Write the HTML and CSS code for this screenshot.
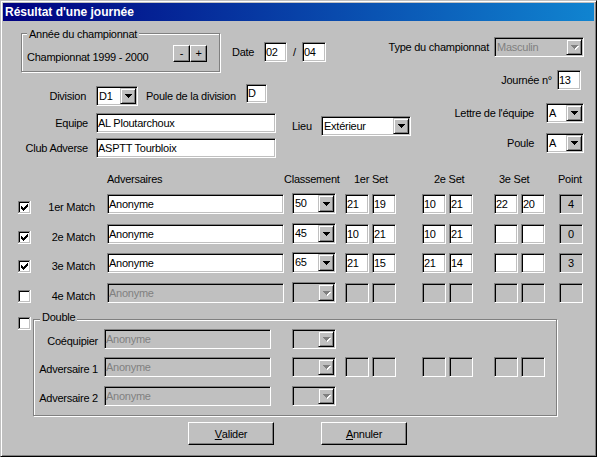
FILE: index.html
```html
<!DOCTYPE html>
<html lang="fr">
<head>
<meta charset="utf-8">
<title>Résultat d'une journée</title>
<link rel="stylesheet" href="styles.css">
</head>
<body>
<svg class="defs" width="0" height="0" aria-hidden="true">
  <defs>
    <symbol id="tri" viewBox="0 0 7 4"><path d="M0 0h7v1h-1v1h-1v1h-1v1h-1v-1h-1v-1h-1v-1h-1z"/></symbol>
    <symbol id="box" viewBox="0 0 13 13">
      <rect x="2" y="2" width="9" height="9" fill="#fff"/>
      <path fill="#808080" d="M0 0h12v1H1v11H0z"/>
      <path fill="#000" d="M1 1h10v1H2v9H1z"/>
      <path fill="#c0c0c0" d="M11 1h1v11H1v-1h10z"/>
      <path fill="#fff" d="M12 0h1v13H0v-1h12z"/>
    </symbol>
    <symbol id="tick" viewBox="0 0 13 13">
      <path fill="#000" d="M3 5h1v3H3z M4 6h1v3H4z M5 7h1v3H5z M6 6h1v3H6z M7 5h1v3H7z M8 4h1v3H8z M9 3h1v3H9z"/>
    </symbol>
  </defs>
</svg>
<div class="window">
  <div class="titlebar">Résultat d'une journée</div>
  <div class="client">

    <div class="row1">
      <div class="group g-annee">
        <span class="legend">Année du championnat</span>
        <div class="annee-body">
          <span class="annee-text">Championnat 1999 - 2000</span>
          <span class="btn btn-sm first">-</span><span class="btn btn-sm">+</span>
        </div>
      </div>
      <div class="date">
        <span class="lbl date-lbl">Date</span>
        <span class="edit w23">02</span>
        <span class="slash">/</span>
        <span class="edit w24">04</span>
      </div>
      <div class="type">
        <span class="lbl type-lbl">Type du championnat</span>
        <div class="combo dis w90"><span class="val">Masculin</span><span class="drop"><svg class="tri-dis" width="8" height="5"><use href="#tri" x="1" y="1" width="7" height="4" fill="#fff"/><use href="#tri" width="7" height="4" fill="#808080"/></svg></span></div>
      </div>
    </div>

    <div class="toprest">
      <div class="leftcol">
        <div class="frow row-div">
          <span class="flabel fl-div">Division</span>
          <div class="combo w42"><span class="val">D1</span><span class="drop"><svg width="7" height="4"><use href="#tri"/></svg></span></div>
          <span class="pdl">Poule de la division</span>
          <span class="edit w21 h19">D</span>
        </div>
        <div class="frow row-eq">
          <span class="flabel">Equipe</span>
          <span class="edit w180">AL Ploutarchoux</span>
          <div class="lieu">
            <span class="lbl lieu-lbl">Lieu</span>
            <div class="combo w90"><span class="val">Extérieur</span><span class="drop"><svg width="7" height="4"><use href="#tri"/></svg></span></div>
          </div>
        </div>
        <div class="frow row-club">
          <span class="flabel">Club Adverse</span>
          <span class="edit w180">ASPTT Tourbloix</span>
        </div>
      </div>
      <div class="rightcol">
        <div class="rrow r-journee">
          <span class="lbl">Journée n°</span>
          <span class="edit w24">13</span>
        </div>
        <div class="rrow r-lettre">
          <span class="lbl">Lettre de l'équipe</span>
          <div class="combo w38"><span class="val">A</span><span class="drop"><svg width="7" height="4"><use href="#tri"/></svg></span></div>
        </div>
        <div class="rrow r-poule">
          <span class="lbl">Poule</span>
          <div class="combo w38"><span class="val">A</span><span class="drop"><svg width="7" height="4"><use href="#tri"/></svg></span></div>
        </div>
      </div>
    </div>

    <div class="mhead">
      <span class="h0"></span>
      <span class="h1">Adversaires</span>
      <span class="h2">Classement</span>
      <span class="h3">1er Set</span>
      <span class="h4">2e Set</span>
      <span class="h5">3e Set</span>
      <span class="h6">Point</span>
    </div>

    <div class="mrow r1">
      <svg class="cb" width="13" height="13"><use href="#box"/><use href="#tick"/></svg>
      <span class="mlabel">1er Match</span>
      <span class="edit w177 ml12">Anonyme</span>
      <div class="combo tall w44 ml8"><span class="val">50</span><span class="drop"><svg width="7" height="4"><use href="#tri"/></svg></span></div>
      <span class="edit s ml9">21</span>
      <span class="edit s ml3">19</span>
      <span class="edit s ml26">10</span>
      <span class="edit s ml3">21</span>
      <span class="edit s ml21">22</span>
      <span class="edit s ml3">20</span>
      <span class="edit s pt ml14">4</span>
    </div>

    <div class="mrow r2">
      <svg class="cb" width="13" height="13"><use href="#box"/><use href="#tick"/></svg>
      <span class="mlabel">2e Match</span>
      <span class="edit w177 ml12">Anonyme</span>
      <div class="combo tall w44 ml8"><span class="val">45</span><span class="drop"><svg width="7" height="4"><use href="#tri"/></svg></span></div>
      <span class="edit s ml9">10</span>
      <span class="edit s ml3">21</span>
      <span class="edit s ml26">10</span>
      <span class="edit s ml3">21</span>
      <span class="edit s ml21"></span>
      <span class="edit s ml3"></span>
      <span class="edit s pt ml14">0</span>
    </div>

    <div class="mrow r3">
      <svg class="cb" width="13" height="13"><use href="#box"/><use href="#tick"/></svg>
      <span class="mlabel">3e Match</span>
      <span class="edit w177 ml12">Anonyme</span>
      <div class="combo tall w44 ml8"><span class="val">65</span><span class="drop"><svg width="7" height="4"><use href="#tri"/></svg></span></div>
      <span class="edit s ml9">21</span>
      <span class="edit s ml3">15</span>
      <span class="edit s ml26">21</span>
      <span class="edit s ml3">14</span>
      <span class="edit s ml21"></span>
      <span class="edit s ml3"></span>
      <span class="edit s pt ml14">3</span>
    </div>

    <div class="mrow r4">
      <svg class="cb" width="13" height="13"><use href="#box"/></svg>
      <span class="mlabel">4e Match</span>
      <span class="edit dis w177 ml12">Anonyme</span>
      <div class="combo dis tall w44 ml8"><span class="val"></span><span class="drop"><svg class="tri-dis" width="8" height="5"><use href="#tri" x="1" y="1" width="7" height="4" fill="#fff"/><use href="#tri" width="7" height="4" fill="#808080"/></svg></span></div>
      <span class="edit dis s ml9"></span>
      <span class="edit dis s ml3"></span>
      <span class="edit dis s ml26"></span>
      <span class="edit dis s ml3"></span>
      <span class="edit dis s ml21"></span>
      <span class="edit dis s ml3"></span>
      <span class="edit dis s ml14"></span>
    </div>

    <div class="double">
      <svg class="cb" width="13" height="13"><use href="#box"/></svg>
      <div class="group g-double">
        <span class="legend">Double</span>
        <div class="drow d1">
          <span class="dlabel">Coéquipier</span>
          <span class="edit dis w167 ml6">Anonyme</span>
          <div class="combo dis w44 ml21"><span class="val"></span><span class="drop"><svg class="tri-dis" width="8" height="5"><use href="#tri" x="1" y="1" width="7" height="4" fill="#fff"/><use href="#tri" width="7" height="4" fill="#808080"/></svg></span></div>
        </div>
        <div class="drow d2">
          <span class="dlabel">Adversaire 1</span>
          <span class="edit dis w167 ml6">Anonyme</span>
          <div class="combo dis w44 ml21"><span class="val"></span><span class="drop"><svg class="tri-dis" width="8" height="5"><use href="#tri" x="1" y="1" width="7" height="4" fill="#fff"/><use href="#tri" width="7" height="4" fill="#808080"/></svg></span></div>
          <span class="edit dis s ml9"></span>
          <span class="edit dis s ml3"></span>
          <span class="edit dis s ml26"></span>
          <span class="edit dis s ml3"></span>
          <span class="edit dis s ml21"></span>
          <span class="edit dis s ml3"></span>
        </div>
        <div class="drow d3">
          <span class="dlabel">Adversaire 2</span>
          <span class="edit dis w167 ml6">Anonyme</span>
          <div class="combo dis w44 ml21"><span class="val"></span><span class="drop"><svg class="tri-dis" width="8" height="5"><use href="#tri" x="1" y="1" width="7" height="4" fill="#fff"/><use href="#tri" width="7" height="4" fill="#808080"/></svg></span></div>
        </div>
      </div>
    </div>

    <div class="buttons">
      <span class="btn pbtn valider"><u>V</u>alider</span>
      <span class="btn pbtn annuler"><u>A</u>nnuler</span>
    </div>

  </div>
</div>
</body>
</html>
```

FILE: styles.css
```css
html, body { margin: 0; padding: 0; }
body {
  background: #c0c0c0;
  font-family: "Liberation Sans", Arial, sans-serif;
  font-size: 11px;
  letter-spacing: -0.25px;
  color: #000;
}
.defs { position: absolute; width: 0; height: 0; overflow: hidden; }

.window {
  width: 597px;
  height: 457px;
  box-sizing: border-box;
  border: 1px solid;
  border-color: #c0c0c0 #000 #000 #c0c0c0;
  box-shadow: inset 1px 1px #fff, inset -1px -1px #808080;
  padding: 2px;
  background: #c0c0c0;
  overflow: hidden;
}
.titlebar {
  height: 18px;
  line-height: 18px;
  padding-left: 2px;
  background: linear-gradient(90deg, #000080, #1084d0);
  color: #fff;
  font-weight: bold;
  font-size: 12px;
  letter-spacing: 0;
  white-space: nowrap;
}

.lbl { line-height: 13px; white-space: nowrap; }

/* group boxes */
.group {
  box-sizing: border-box;
  border: 1px solid #808080;
  box-shadow: inset 1px 1px #fff, 1px 1px #fff;
}
.legend {
  display: block;
  width: max-content;
  padding: 0 2px;
  background: #c0c0c0;
  line-height: 13px;
}

/* edits */
.edit {
  display: block;
  flex: none;
  box-sizing: border-box;
  height: 20px;
  line-height: 18px;
  padding: 0 1px;
  border: 1px solid;
  border-color: #808080 #fff #fff #808080;
  box-shadow: inset 1px 1px #000, inset -1px -1px #c0c0c0;
  background: #fff;
  white-space: nowrap;
  overflow: hidden;
}
.edit.h19 { height: 19px; line-height: 17px; }
.edit.dis { background: #c0c0c0; color: #808080; }
.edit.pt { background: #c0c0c0; text-align: center; }
.edit.s { width: 24px; }
.w21 { width: 21px; }
.w23 { width: 23px; }
.w24 { width: 24px; }
.w38 { width: 38px; }
.w42 { width: 42px; }
.w44 { width: 44px; }
.w90 { width: 90px; }
.w167 { width: 167px; }
.w177 { width: 177px; }
.w180 { width: 180px; }

.ml3 { margin-left: 3px; }
.ml6 { margin-left: 6px; }
.ml8 { margin-left: 8px; }
.ml9 { margin-left: 9px; }
.ml12 { margin-left: 12px; }
.ml14 { margin-left: 14px; }
.ml21 { margin-left: 21px; }
.ml26 { margin-left: 26px; }

/* combos */
.combo {
  display: flex;
  flex: none;
  box-sizing: border-box;
  height: 20px;
  padding: 1px;
  border: 1px solid;
  border-color: #808080 #fff #fff #808080;
  box-shadow: inset 1px 1px #000, inset -1px -1px #c0c0c0;
  background: #fff;
}
.combo .val {
  flex: 1;
  padding-left: 1px;
  line-height: 16px;
  white-space: nowrap;
  overflow: hidden;
}
.combo.tall { height: 21px; margin-top: -1px; }
.combo.tall .val { line-height: 17px; }
.combo.dis { background: #c0c0c0; color: #808080; }
.drop {
  width: 16px;
  flex: none;
  box-sizing: border-box;
  border: 1px solid;
  border-color: #c0c0c0 #000 #000 #c0c0c0;
  box-shadow: inset 1px 1px #fff, inset -1px -1px #808080;
  background: #c0c0c0;
  display: flex;
  align-items: center;
  justify-content: center;
}
.drop svg { display: block; }
.tri-dis { margin: 1px 0 0 1px; }

/* buttons */
.btn {
  box-sizing: border-box;
  display: flex;
  align-items: center;
  justify-content: center;
  border: 1px solid;
  border-color: #fff #000 #000 #fff;
  box-shadow: inset -1px -1px #808080;
  background: #c0c0c0;
  flex: none;
}
.btn-sm { width: 17px; height: 17px; line-height: 13px; }
.btn-sm.first { margin-left: auto; }
.pbtn { width: 86px; height: 23px; }

/* checkbox */
.cb { display: block; flex: none; }

/* row 1 */
.row1 {
  display: flex;
  align-items: flex-start;
  margin-top: 12px;
  padding-right: 10px;
}
.g-annee { margin-left: 18px; width: 199px; height: 39px; }
.g-annee .legend { margin: -6px 0 0 5px; }
.annee-body {
  display: flex;
  align-items: flex-start;
  margin-top: 4px;
  padding: 0 12px 0 5px;
}
.annee-text { margin-top: 6px; line-height: 13px; white-space: nowrap; }

.date { display: flex; align-items: center; margin: 9px 0 0 12px; }
.date-lbl { width: 32px; }
.slash { width: 15px; text-align: center; line-height: 13px; }

.type { display: flex; align-items: center; margin: 4px 0 0 auto; }
.type-lbl { margin-right: 5px; }

/* upper fields */
.toprest {
  display: flex;
  justify-content: space-between;
  align-items: flex-start;
  padding-right: 10px;
}
.leftcol { display: flex; flex-direction: column; }
.frow { display: flex; align-items: flex-start; }
.flabel {
  width: 85px;
  margin-right: 8px;
  text-align: right;
  line-height: 20px;
  white-space: nowrap;
}
.flabel.fl-div { width: 83px; margin-right: 10px; }
.row-div { margin-top: 14px; }
.pdl { width: 100px; margin-left: 8px; line-height: 20px; white-space: nowrap; }
.row-div .h19 { margin-top: -2px; }
.row-eq { margin-top: 7px; }
.lieu { display: flex; align-items: center; margin: 3px 0 0 16px; }
.lieu-lbl { width: 29px; }
.row-club { margin-top: 2px; }

.rightcol {
  display: flex;
  flex-direction: column;
  align-items: flex-end;
  margin-top: -2px;
}
.rrow { display: flex; align-items: center; }
.r-journee { margin-right: 3px; }
.r-journee .lbl { margin-right: 5px; }
.r-lettre { margin-top: 13px; }
.r-lettre .lbl, .r-poule .lbl { margin-right: 12px; }
.r-poule { margin-top: 10px; }

/* matches */
.mhead { display: flex; margin-top: 15px; line-height: 13px; white-space: nowrap; }
.h0 { width: 104px; }
.h1 { width: 177px; }
.h2 { width: 70px; }
.h3 { width: 80px; }
.h4 { width: 65px; }
.h5 { width: 59px; }

.mrow { display: flex; align-items: flex-start; height: 20px; }
.mrow .cb { margin: 7px 0 0 15px; }
.mlabel {
  width: 64px;
  flex: none;
  text-align: right;
  margin-top: 7px;
  line-height: 13px;
  white-space: nowrap;
}
.r1 { margin-top: 8px; }
.r2 { margin-top: 10px; }
.r3 { margin-top: 9px; }
.r4 { margin-top: 10px; }

/* double */
.double { display: flex; align-items: flex-start; margin-top: 16px; }
.double > .cb { margin: -2px 0 0 15px; }
.g-double { margin-left: 2px; width: 524px; height: 97px; }
.g-double .legend { margin: -9px 0 0 6px; }
.drow { display: flex; align-items: flex-start; }
.dlabel {
  width: 64px;
  flex: none;
  text-align: right;
  margin-top: 6px;
  line-height: 13px;
  white-space: nowrap;
}
.d1 { margin-top: 5px; }
.d2 { margin-top: 8px; }
.d3 { margin-top: 9px; }

/* bottom buttons */
.buttons { display: flex; margin-top: 6px; }
.valider { margin-left: 185px; }
.annuler { margin-left: 47px; }
```
